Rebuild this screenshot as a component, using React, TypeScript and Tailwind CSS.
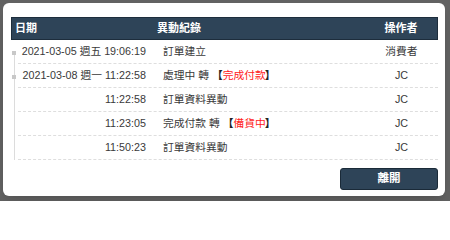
import React from "react"

type Row = {
  date?: string
  time: string
  record: React.ReactNode
  operator: string
}

const Tag = ({ children }: { children: React.ReactNode }) => (
  <>
    <span className="font-bold text-[#222]">【</span>
    <span className="text-[#ff1a1a]">{children}</span>
    <span className="font-bold text-[#222] -ml-[1px]">】</span>
  </>
)

const rows: Row[] = [
  { date: "2021-03-05 週五", time: "19:06:19", record: "訂單建立", operator: "消費者" },
  {
    date: "2021-03-08 週一",
    time: "11:22:58",
    record: (
      <>
        處理中 轉 <Tag>完成付款</Tag>
      </>
    ),
    operator: "JC",
  },
  { time: "11:22:58", record: "訂單資料異動", operator: "JC" },
  {
    time: "11:23:05",
    record: (
      <>
        完成付款 轉 <Tag>備貨中</Tag>
      </>
    ),
    operator: "JC",
  },
  { time: "11:50:23", record: "訂單資料異動", operator: "JC" },
]

export default function App() {
  return (
    <div
      className="w-[450px] h-[201px] bg-[#626262] pt-[3px] pl-[3px] overflow-hidden"
      style={{ fontFamily: '"Liberation Sans", "Noto Sans CJK TC", sans-serif' }}
    >
      <div className="w-[442px] h-[193px] bg-white rounded-[6px] pt-[14px] pl-[8px] flex flex-col shadow-lg">
        {/* table */}
        <div className="w-[427px] text-[10.75px] text-[#3a3a3a]">
          <div className="flex h-[23px] items-center bg-[#2e4458] border border-[#1d2d3c] text-white font-bold text-[11px]">
            <div className="w-[138px] pl-[3px]">日期</div>
            <div className="w-[215px] pl-[7px]">異動紀錄</div>
            <div className="flex-1 text-center">操作者</div>
          </div>
          {rows.map((r, i) => (
            <div key={i} className="flex h-[24px]">
              <div className="relative w-[7px] shrink-0">
                <div
                  className={
                    i === 0
                      ? "absolute left-[3px] top-[14px] bottom-0 w-px bg-[#dcdcdc]"
                      : "absolute left-[3px] top-0 bottom-0 w-px bg-[#dcdcdc]"
                  }
                />
                {r.date && (
                  <div className="absolute left-[1px] top-[11px] w-[4px] h-[4px] bg-[#c8c8c8]" />
                )}
              </div>
              <div className="flex flex-1 items-center border-b border-dashed border-[#dedede]">
                <div className="w-[132px] pr-[4px] text-right whitespace-nowrap">
                  {r.date && <span>{r.date} </span>}
                  {r.time}
                </div>
                <div className="w-[215px] pl-[13px] whitespace-nowrap">{r.record}</div>
                <div className="flex-1 text-center">{r.operator}</div>
              </div>
            </div>
          ))}
        </div>
        <div className="w-[427px] flex justify-end mt-[8px]">
          <button className="w-[98px] h-[22px] rounded-[3px] bg-[#2e4458] border border-[#1a2a38] text-white text-[11.5px] font-bold">
            離開
          </button>
        </div>
      </div>
    </div>
  )
}
